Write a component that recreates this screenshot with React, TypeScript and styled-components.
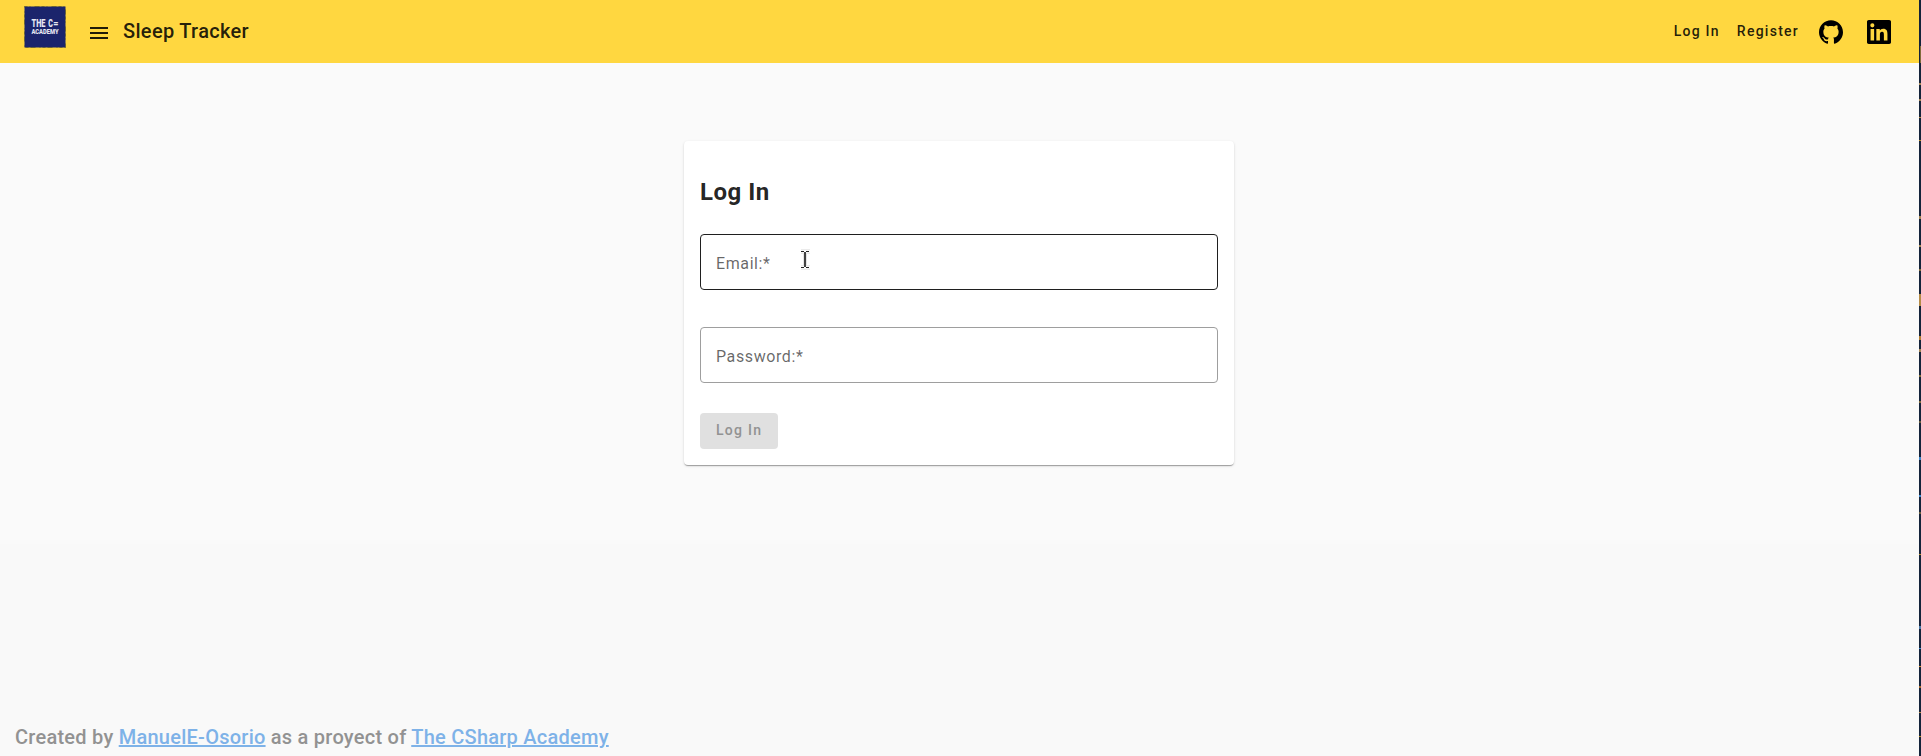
import React from "react";
import styled, { createGlobalStyle } from "styled-components";

const GlobalStyle = createGlobalStyle`
  html, body, #root { height: 100%; }
  body { margin: 0; overflow: hidden; font-family: Roboto, "Liberation Sans", sans-serif; color: rgba(0, 0, 0, 0.87); }
  *, *::before, *::after { box-sizing: border-box; }
`;

const Screen = styled.div`
  display: flex;
  height: 756px;
`;

const Page = styled.div`
  flex: 1;
  display: flex;
  flex-direction: column;
  background: linear-gradient(#fafafa 0 544px, #f9f9f9 544px);
`;

const Edge = styled.div`
  width: 2px;
  background: #14233a;
`;

const EdgeMarks = styled.svg`
  display: block;
`;

const Toolbar = styled.header`
  display: flex;
  align-items: center;
  height: 63px;
  padding: 0 28px 0 24px;
  background: #ffd740;
`;

const Logo = styled.svg`
  width: 42px;
  height: 42px;
  margin-bottom: 9px;
`;

const MenuButton = styled.button`
  display: flex;
  margin: 3px 0 0 21px;
  padding: 0;
  border: 0;
  background: none;
  color: #201b08;
`;

const AppName = styled.span`
  margin-left: 12px;
  margin-bottom: 2px;
  font-size: 20px;
  font-weight: 500;
  line-height: 32px;
  letter-spacing: 0.32px;
`;

const Spacer = styled.div`
  flex: 1;
`;

const NavLink = styled.a`
  margin-right: 17px;
  margin-bottom: 1px;
  font-size: 14px;
  font-weight: 500;
  letter-spacing: 1.25px;
`;

const SocialLink = styled.a<{ $gap: number }>`
  display: flex;
  margin-left: ${({ $gap }) => $gap}px;
  margin-top: 1px;
  color: #000;
`;

const Main = styled.main`
  flex: 1;
  display: flex;
  justify-content: center;
  align-items: flex-start;
  padding: 78px 1px 0 0;
`;

const Card = styled.form`
  display: flex;
  flex-direction: column;
  align-items: flex-start;
  width: 550px;
  height: 324px;
  padding: 16px;
  border-radius: 4px;
  background: #fff;
  box-shadow: 0 2px 1px -1px rgba(0, 0, 0, 0.2), 0 1px 1px rgba(0, 0, 0, 0.14), 0 1px 3px rgba(0, 0, 0, 0.12);
`;

const Title = styled.h1`
  margin: 19px 0 26px;
  font-size: 24px;
  font-weight: 700;
  line-height: 32px;
  letter-spacing: 0.5px;
`;

const Field = styled.label<{ $hovered?: boolean }>`
  position: relative;
  display: flex;
  align-items: center;
  width: 100%;
  height: 56px;
  margin-bottom: 37px;
  padding: 2px 15px 0;
  border: 1px solid ${({ $hovered }) => ($hovered ? "#1f1f1f" : "#9e9e9e")};
  border-radius: 4px;
  font-size: 16px;
  letter-spacing: 0.6px;
  color: rgba(0, 0, 0, 0.6);
`;

const Pointer = styled.svg`
  position: absolute;
  left: 98px;
  top: 14px;
`;

const SubmitButton = styled.button`
  width: 78px;
  height: 36px;
  margin-top: -7px;
  padding: 0 0 2px 16px;
  border: 0;
  border-radius: 4px;
  background: #e0e0e0;
  color: #929292;
  font: 500 14px Roboto, "Liberation Sans", sans-serif;
  letter-spacing: 1.25px;
  text-align: left;
`;

const Footer = styled.footer`
  padding: 0 15px 3px;
  font-size: 20px;
  font-weight: 500;
  line-height: 32px;
  letter-spacing: 0.25px;
  color: #929292;
`;

const FooterLink = styled.a`
  color: #7eb2e8;
  text-decoration: underline;
`;

const edgeMarks: [number, number, string][] = [
  [46, 17, "#806b3b"], [83, 2, "#a18455"], [99, 2, "#a18455"], [117, 1, "#b58b46"],
  [140, 1, "#b58b28"], [216, 3, "#a18455"], [245, 2, "#a18455"], [269, 2, "#806b3b"],
  [294, 12, "#b58b46"], [336, 4, "#b07c32"], [349, 3, "#a18455"], [375, 2, "#806b3b"],
  [401, 2, "#806b3b"], [421, 2, "#665b3c"], [457, 3, "#3f88ce"], [495, 2, "#3f88ce"],
  [512, 2, "#665b3c"], [554, 1, "#b58b28"], [626, 3, "#4b79aa"], [648, 1, "#3f88ce"],
  [666, 1, "#d78b32"], [686, 2, "#a5682e"], [712, 1, "#b58b46"], [736, 1, "#b58b28"],
];

export default function App() {
  return (
    <>
      <GlobalStyle />
      <Screen>
        <Page>
          <Toolbar>
            <Logo viewBox="0 0 42 42">
              <rect x=".5" y=".5" width="41" height="41" fill="#1b246c" />
              <rect x=".5" y=".5" width="41" height="41" fill="none" stroke="#696238" strokeDasharray="3 2 1 4 5 2" />
              <g fill="#e6e7f2" fontFamily="Roboto, sans-serif" fontWeight="900">
                <text x="7.5" y="21" fontSize="10" textLength="14" lengthAdjust="spacingAndGlyphs">THE</text>
                <text x="24.3" y="21" fontSize="10" textLength="4.6" lengthAdjust="spacingAndGlyphs">C</text>
                <text x="29.3" y="21" fontSize="10" textLength="5.2" lengthAdjust="spacingAndGlyphs">=</text>
                <text x="7.5" y="28" fontSize="7.6" textLength="27" lengthAdjust="spacingAndGlyphs">ACADEMY</text>
              </g>
            </Logo>
            <MenuButton type="button" aria-label="Menu">
              <svg width="24" height="24" viewBox="0 0 24 24" fill="currentColor">
                <path d="M3 18h18v-2H3v2zm0-5h18v-2H3v2zm0-7v2h18V6H3z" />
              </svg>
            </MenuButton>
            <AppName>Sleep Tracker</AppName>
            <Spacer />
            <NavLink>Log In</NavLink>
            <NavLink>Register</NavLink>
            <SocialLink $gap={3} aria-label="GitHub">
              <svg width="24" height="24" viewBox="0 0 24 24" fill="currentColor">
                <path d="M12 .297c-6.63 0-12 5.373-12 12 0 5.303 3.438 9.8 8.205 11.385.6.113.82-.258.82-.577 0-.285-.01-1.04-.015-2.04-3.338.724-4.042-1.61-4.042-1.61C4.422 18.07 3.633 17.7 3.633 17.7c-1.087-.744.084-.729.084-.729 1.205.084 1.838 1.236 1.838 1.236 1.07 1.835 2.809 1.305 3.495.998.108-.776.417-1.305.76-1.605-2.665-.3-5.466-1.332-5.466-5.93 0-1.31.465-2.38 1.235-3.22-.135-.303-.54-1.523.105-3.176 0 0 1.005-.322 3.3 1.23.96-.267 1.98-.399 3-.405 1.02.006 2.04.138 3 .405 2.28-1.552 3.285-1.23 3.285-1.23.645 1.653.24 2.873.12 3.176.765.84 1.23 1.91 1.23 3.22 0 4.61-2.805 5.625-5.475 5.92.42.36.81 1.096.81 2.22 0 1.606-.015 2.896-.015 3.286 0 .315.21.69.825.57C20.565 22.092 24 17.592 24 12.297c0-6.627-5.373-12-12-12" />
              </svg>
            </SocialLink>
            <SocialLink $gap={24} aria-label="LinkedIn">
              <svg width="24" height="24" viewBox="0 0 24 24" fill="currentColor">
                <path d="M20.447 20.452h-3.554v-5.569c0-1.328-.027-3.037-1.852-3.037-1.853 0-2.136 1.445-2.136 2.939v5.667H9.351V9h3.414v1.561h.046c.477-.9 1.637-1.85 3.37-1.85 3.601 0 4.267 2.37 4.267 5.455v6.286zM5.337 7.433a2.062 2.062 0 0 1-2.063-2.065 2.064 2.064 0 1 1 2.063 2.065zm1.782 13.019H3.555V9h3.564v11.452zM22.225 0H1.771C.792 0 0 .774 0 1.729v20.542C0 23.227.792 24 1.771 24h20.451C23.2 24 24 23.227 24 22.271V1.729C24 .774 23.2 0 22.222 0h.003z" />
              </svg>
            </SocialLink>
          </Toolbar>
          <Main>
            <Card>
              <Title>Log In</Title>
              <Field $hovered>
                Email:*
                <Pointer width="13" height="21" viewBox="0 0 13 21" fill="none">
                  <path d="M2 2.5h9M6 2.5v16M2 18.5h9" stroke="#d8d8d8" strokeWidth="4" />
                  <path d="M2 2.5h9M6 2.5v16M2 18.5h9" stroke="#fff" strokeWidth="2.6" />
                  <path d="M2 2.5h3M7 2.5h3M2 18.5h3M7 18.5h3" stroke="#222" />
                  <path d="M6 3v15" stroke="#111" strokeWidth="1.6" />
                </Pointer>
              </Field>
              <Field>Password:*</Field>
              <SubmitButton type="button" disabled>Log In</SubmitButton>
            </Card>
          </Main>
          <Footer>
            Created by <FooterLink>ManuelE-Osorio</FooterLink> as a proyect of <FooterLink>The CSharp Academy</FooterLink>
          </Footer>
        </Page>
        <Edge>
          <EdgeMarks width="2" height="756">
            {edgeMarks.map(([y, height, color]) => (
              <rect key={y} x={y === 46 ? 1 : 0} y={y} width="2" height={height} fill={color} />
            ))}
          </EdgeMarks>
        </Edge>
      </Screen>
    </>
  );
}
